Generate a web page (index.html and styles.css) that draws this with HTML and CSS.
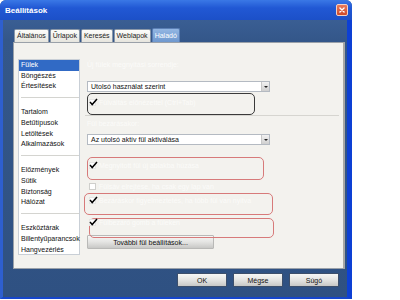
FILE: index.html
```html
<!DOCTYPE html>
<html lang="hu">
<head>
<meta charset="utf-8">
<title>Beállítások</title>
<link rel="stylesheet" href="styles.css">
</head>
<body>
<div class="window">
  <div class="titlebar">
    <span class="title">Beállítások</span>
    <span class="close"><svg width="12" height="12" viewBox="0 0 12 12"><path d="M3.5 3.5 L8.5 8.5 M8.5 3.5 L3.5 8.5" stroke="#fff" stroke-width="1.6" stroke-linecap="round"/></svg></span>
  </div>
  <div class="body">
    <div class="tabs">
      <span class="tab">Általános</span>
      <span class="tab">Űrlapok</span>
      <span class="tab">Keresés</span>
      <span class="tab">Weblapok</span>
      <span class="tab active">Haladó</span>
    </div>
    <div class="panel">
      <ul class="list">
        <li class="sel">Fülek</li>
        <li>Böngészés</li>
        <li>Értesítések</li>
        <li class="sep"></li>
        <li>Tartalom</li>
        <li>Betűtípusok</li>
        <li>Letöltések</li>
        <li>Alkalmazások</li>
        <li class="sep"></li>
        <li>Előzmények</li>
        <li>Sütik</li>
        <li>Biztonság</li>
        <li>Hálózat</li>
        <li class="sep"></li>
        <li>Eszköztárak</li>
        <li>Billentyűparancsok</li>
        <li>Hangvezérlés</li>
      </ul>
      <div class="pane">
        <div class="faint label-top">Új fülek megnyitási sorrendje:</div>
        <div class="select">Utolsó használat szerint<span class="arrow"></span></div>
        <div class="hl hl-black">
          <div class="row"><span class="cb"><svg class="tick" width="9" height="8" viewBox="0 0 9 8"><path d="M1 4 L3.2 6.5 L8 1" fill="none" stroke="#000" stroke-width="1.5"/></svg></span><span class="faint">Fülváltás előnézettel (Ctrl+Tab)</span></div>
        </div>
        <div class="rule"></div>
        <div class="faint label-mid">Fül bezárásakor:</div>
        <div class="select">Az utolsó aktív fül aktiválása<span class="arrow"></span></div>
        <div class="hl hl-red r1">
          <div class="row"><span class="cb"><svg class="tick" width="9" height="8" viewBox="0 0 9 8"><path d="M1 4 L3.2 6.5 L8 1" fill="none" stroke="#000" stroke-width="1.5"/></svg></span><span class="faint">Megnyitott fül új ablakba húzása</span></div>
        </div>
        <div class="row plain"><span class="cb empty"></span><span class="faint">Fülsáv elrejtése, ha csak egy lap van</span></div>
        <div class="hl hl-red r2">
          <div class="row"><span class="cb"><svg class="tick" width="9" height="8" viewBox="0 0 9 8"><path d="M1 4 L3.2 6.5 L8 1" fill="none" stroke="#000" stroke-width="1.5"/></svg></span><span class="faint">Bezáráskor figyelmeztetés, ha több fül van nyitva</span></div>
        </div>
        <div class="hl hl-red r3">
          <div class="row"><span class="cb"><svg class="tick" width="9" height="8" viewBox="0 0 9 8"><path d="M1 4 L3.2 6.5 L8 1" fill="none" stroke="#000" stroke-width="1.5"/></svg></span><span class="faint">Fülbezáró gomb a füleken</span></div>
        </div>
        <button class="btn more">További fül beállítások...</button>
      </div>
    </div>
    <div class="buttons">
      <button class="btn dlg">OK</button>
      <button class="btn dlg">Mégse</button>
      <button class="btn dlg">Súgó</button>
    </div>
  </div>
</div>
</body>
</html>
```
FILE: styles.css
```css
* { box-sizing: border-box; }
html, body { margin: 0; padding: 0; background: #ffffff; }
body { font-family: "Liberation Sans", Arial, sans-serif; font-size: 7px; color: #111; }

.window {
  width: 352px;
  height: 299px;
  display: flex;
  flex-direction: column;
  background: #34578a;
  border-radius: 6px 6px 0 0;
  overflow: hidden;
}

.titlebar {
  height: 20px;
  flex: none;
  display: flex;
  align-items: center;
  justify-content: space-between;
  padding: 0 4px 0 5px;
  background: linear-gradient(#3a78e6, #2158d4 40%, #1c50c8);
}
.title { color: #fff; font-weight: bold; font-size: 8px; }
.close {
  width: 12px; height: 12px;
  border: 1px solid #f4d0c4;
  border-radius: 2px;
  background: linear-gradient(#e8795a, #cf4a2a);
  display: flex; align-items: center; justify-content: center;
}
.close svg { display: block; }

.body {
  flex: 1;
  display: flex;
  flex-direction: column;
  padding: 8px 2px 0 10px;
  border-left: 3px solid #2e5fcf;
  border-right: 5px solid #0d40d4;
  border-bottom: 2px solid #1646cc;
  background: linear-gradient(#3a5e93, #34578a 20px, #2f5182);
}

.tabs { display: flex; align-items: flex-end; gap: 1px; height: 14px; padding-left: 1px; }
.tab {
  height: 13px;
  padding: 0 2px;
  line-height: 12px;
  border: 1px solid #8a97a8;
  border-bottom: none;
  border-radius: 2px 2px 0 0;
  background: linear-gradient(#fdfdfb, #e6e5de);
  color: #222;
}
.tab.active {
  height: 14px;
  line-height: 13px;
  background: linear-gradient(#93b6e2, #6e98cf);
  color: #fff;
  border-color: #5b7fb5;
}

.panel {
  height: 227px;
  display: flex;
  padding: 16px 0 0 4px;
  background: #f3f2ee;
  border: 1px solid #9aa1a9;
  border-right: 2px solid #a8a8a6;
}

.list {
  list-style: none;
  margin: 0;
  padding: 0;
  width: 62px;
  height: 196px;
  background: #fff;
  border: 1px solid #c9cfd6;
  flex: none;
}
.list li { height: 10.6px; line-height: 10.6px; padding-left: 2px; white-space: nowrap; }
.list li.sel { background: #316ac5; color: #fff; }
.list li.sep::after {
  content: ""; display: block; height: 1px; background: #d4d4d0; margin-top: 5px;
}

.pane { margin-left: 7px; flex: 1; display: flex; flex-direction: column; padding-right: 4px; }

.faint { color: #fbfbf9; white-space: nowrap; }
.label-top { margin-top: 1px; height: 9px; line-height: 9px; }
.label-mid { margin-top: 3px; height: 9px; line-height: 9px; }

.select {
  position: relative;
  width: 183px;
  height: 11px;
  line-height: 9px;
  padding-left: 3px;
  background: #fff;
  border: 1px solid #b4bac2;
  color: #111;
}
.label-top + .select { margin-top: 12px; }
.label-mid + .select { margin-top: 6px; }
.arrow {
  position: absolute; right: 0; top: 0;
  width: 8px; height: 9px;
  background: linear-gradient(#f2f2f2, #cfcfcf);
  border-left: 1px solid #c8c8c8;
}
.arrow::after {
  content: ""; position: absolute; left: 2px; top: 4px;
  border-left: 2px solid transparent; border-right: 2px solid transparent; border-top: 2px solid #222;
}

.hl { border: 1px solid; border-radius: 5px; }
.hl-black { border-color: #3a3a3a; margin-top: 1px; width: 168px; height: 22px; padding: 4px 0 0 0; }
.hl-red { border-color: #d77a7a; }
.r1 { margin-top: 12px; width: 177px; height: 23px; padding: 3px 0 0 0; }
.r2 { margin-top: 3px; margin-left: -3px; width: 189px; height: 22px; padding: 2px 0 0 3px; }
.r3 { margin-top: 3px; margin-left: 2px; width: 185px; height: 20px; padding: 0; position: relative; z-index: 1; }
.r3 .row { margin-left: -2px; margin-top: -1px; }

.rule { height: 1px; background: #d6d5d0; margin: 0 0 0 -2px; }

.row { display: flex; align-items: center; gap: 3px; height: 9px; }
.row.plain { margin-top: 2px; padding-left: 1px; height: 8px; }
.cb {
  position: relative;
  width: 7px; height: 7px;
  margin-left: 1px;
  background: #fff;
  border: 1px solid #e6e6e4;
  flex: none;
}
.cb.empty { border-color: #cfcfcc; }
.tick { position: absolute; left: -1px; top: -2px; }

.btn {
  font-family: "Liberation Sans", Arial, sans-serif;
  font-size: 7px;
  color: #111;
  padding: 0;
  background: linear-gradient(#f7f7f6, #e4e4e2 50%, #c8c8c6);
  border: 1px solid #b9b9b7;
  border-radius: 1px;
}
.more { margin-top: -3px; width: 127px; height: 14px; position: relative; z-index: 0; }

.buttons { display: flex; justify-content: flex-end; gap: 6px; margin-top: 4px; padding-right: 6px; }
.dlg { width: 50px; height: 14px; border-color: #3d4f6b; }
```
